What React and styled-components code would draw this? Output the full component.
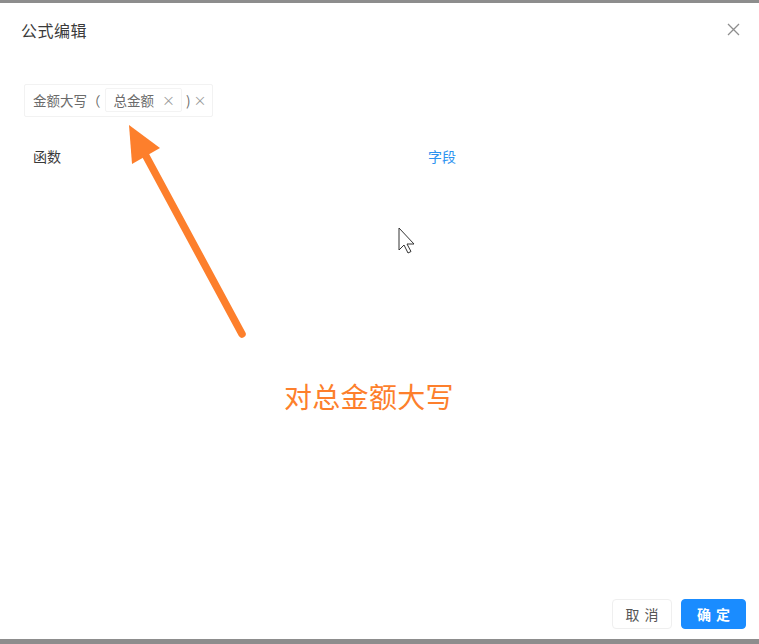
import React from 'react';
import styled, { createGlobalStyle } from 'styled-components';

const GlobalStyle = createGlobalStyle`
    html, body { margin: 0; padding: 0; background: #8d8d8d; }
    body { font-family: "Noto Sans CJK SC", "Noto Sans", sans-serif; }
    * { box-sizing: border-box; }
`;

// --- Moldura do diálogo ---
const Screen = styled.div`
    width: 759px; height: 644px; padding: 3px 0 5px;
    display: flex; flex-direction: column;
`;
const Dialog = styled.div`
    position: relative; flex: 1; background: #fff;
    display: flex; flex-direction: column;
`;
const Header = styled.div`
    height: 56px; display: flex; align-items: center; justify-content: space-between;
    padding: 0 18px 0 21px;
`;
const Title = styled.div`
    font-size: 16px; color: #3a3a3a; letter-spacing: 0.5px; margin-top: -3px;
`;
const CloseButton = styled.button`
    border: none; background: none; padding: 0; cursor: pointer;
    width: 16px; height: 16px; display: flex; align-items: center; justify-content: center;
    margin-top: -3px;
`;
const Body = styled.div`
    flex: 1; padding: 25px 24px 0; display: flex; flex-direction: column;
`;

// --- Editor de fórmula ---
const FormulaBox = styled.div`
    width: 189px; height: 33px; display: flex; align-items: center;
    padding-left: 8px; border: 1px solid #f2f2f2; border-radius: 2px;
    font-size: 13.5px; color: #6b6b6b; white-space: nowrap;
    padding-bottom: 2px;
`;
const Tag = styled.span`
    display: inline-flex; align-items: center; gap: 8px;
    height: 24px; padding: 0 6px 0 8px; margin: 0 4px 0 4px;
    border: 1px solid #f3f3f3; border-radius: 2px;
`;
const Remove = styled.span`
    font-size: 13px; color: #9a9a9a; margin-left: ${p => p.$gap || 0}px;
`;
const Tabs = styled.div`
    display: flex; margin-top: 29px; padding-left: 9px;
`;
const TabLabel = styled.div`
    font-size: 14px; color: ${p => p.$active ? '#2b92f0' : '#3a3a3a'};
    width: ${p => p.$width || 'auto'};
`;

// --- Rodapé ---
const Footer = styled.div`
    display: flex; justify-content: flex-end; gap: 9px; padding: 0 13px 10px 0;
`;
const Button = styled.button`
    height: 30px; padding: 0; border-radius: 4px; cursor: pointer;
    font-family: inherit; font-size: 14px; letter-spacing: 5px; text-indent: 5px;
    width: ${p => p.$width}px;
    border: 1px solid ${p => p.$primary ? '#1a8cff' : '#efefef'};
    background: ${p => p.$primary ? '#1a8cff' : '#fff'};
    color: ${p => p.$primary ? '#fff' : '#555'};
    font-weight: ${p => p.$primary ? 700 : 400};
`;

// --- Anotação sobreposta ---
const Overlay = styled.svg`
    position: absolute; left: 0; top: -3px; pointer-events: none;
`;
const Annotation = styled.div`
    position: absolute; left: 284px; top: 373px;
    font-size: 28px; color: #fd7f2c; letter-spacing: 0.3px;
`;

const App = () => (
    <Screen>
        <GlobalStyle />
        <Dialog>
            <Header>
                <Title>公式编辑</Title>
                <CloseButton aria-label="关闭">
                    <svg width="13" height="13" viewBox="0 0 13 13">
                        <path d="M1 1 L12 12 M12 1 L1 12" stroke="#8e8e8e" strokeWidth="1.3" />
                    </svg>
                </CloseButton>
            </Header>
            <Body>
                <FormulaBox>
                    金额大写（
                    <Tag>总金额<Remove>×</Remove></Tag>
                    )<Remove $gap={3}>×</Remove>
                </FormulaBox>
                <Tabs>
                    <TabLabel $width="395px">函数</TabLabel>
                    <TabLabel $active>字段</TabLabel>
                </Tabs>
            </Body>
            <Footer>
                <Button $width={60}>取消</Button>
                <Button $width={65} $primary>确定</Button>
            </Footer>
            <Overlay width="759" height="644" viewBox="0 0 759 644">
                <line x1="242" y1="334" x2="140" y2="145" stroke="#fd7f2c" strokeWidth="7.5" strokeLinecap="round" />
                <polygon points="129,125 132,164 160,148" fill="#fd7f2c" />
                <path d="M399 228 L399 250 L404 245 L408 253 L411 251.5 L407 244 L414 244 Z"
                    fill="#fff" stroke="#333" strokeWidth="1" strokeLinejoin="round" />
            </Overlay>
            <Annotation>对总金额大写</Annotation>
        </Dialog>
    </Screen>
);

export default App;
